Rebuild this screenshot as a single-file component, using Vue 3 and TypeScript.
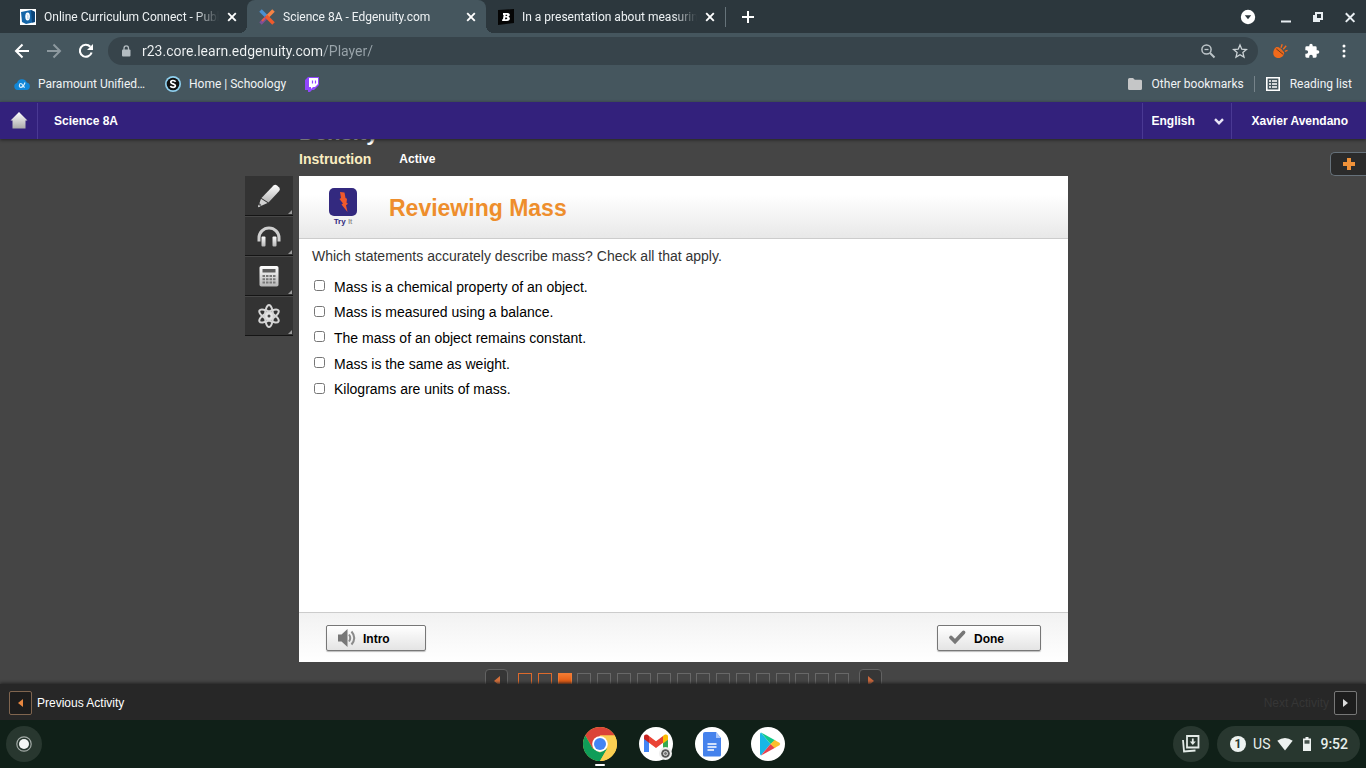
<script setup lang="ts">
import { ref } from 'vue'

interface Tab { id: string; title: string; active: boolean }

const tabs: Tab[] = [
  { id: 'connect', title: 'Online Curriculum Connect - Public', active: false },
  { id: 'edgenuity', title: 'Science 8A - Edgenuity.com', active: true },
  { id: 'brainly', title: 'In a presentation about measuring', active: false },
]
const address = ref('r23.core.learn.edgenuity.com/Player/')
const language = ref('English')
const answers = [
  'Mass is a chemical property of an object.',
  'Mass is measured using a balance.',
  'The mass of an object remains constant.',
  'Mass is the same as weight.',
  'Kilograms are units of mass.',
]
const checked = ref<string[]>([])
const steps = Array.from({ length: 17 }, (_, i) => (i < 2 ? 'done' : i === 2 ? 'current' : 'todo'))
</script>

<template>
  <div class="screen">
    <header class="browser">
      <div class="tabstrip">
        <div v-for="tab in tabs" :key="tab.id" class="tab" :class="{ active: tab.active }">
          <svg v-if="tab.id === 'connect'" class="i16" viewBox="0 0 16 16">
            <rect width="16" height="16" fill="#fff" />
            <path d="M1 3 11 1l4 2v10l-9 2-4-2z" fill="#1566a8" />
            <path d="M11 1l4 2v10l-3 .6z" fill="#0c4478" />
            <ellipse cx="7.6" cy="7.4" rx="2.3" ry="4" fill="#fff" />
            <path d="M7 5.5c1.5 1 .5 2.500 1 4.500" stroke="#9cc3e2" fill="none" />
          </svg>
          <svg v-else-if="tab.id === 'edgenuity'" class="i16" viewBox="0 0 16 16">
            <path d="M1.500 1.500 8 8" stroke="#4b8fd0" stroke-width="3.600" />
            <path d="M8 8 14.500 1.500" stroke="#f58345" stroke-width="3.600" />
            <path d="M8 8 1.500 14.500" stroke="#7d4f96" stroke-width="3.600" />
            <path d="M7 7 14.500 14.500" stroke="#ee5a2c" stroke-width="3.600" />
            <path d="M3 12 6 9" stroke="#e2574c" stroke-width="2" />
          </svg>
          <svg v-else class="i16" viewBox="0 0 16 16">
            <path d="M0 1 16 0v14L0 16z" fill="#050505" />
            <path d="M5 4h4.500c3 0 2.800 3 .9 3.700C13 8.500 12 12 9 12H4l.5-2H5l.6-4H5zM7.700 5.800 7.500 7h1c1 0 1-1.200.2-1.200zM7.300 8.600 7 10.200h1.300c1.200 0 1.300-1.600.2-1.600z" fill="#fff" />
          </svg>
          <span class="tab-title">{{ tab.title }}</span>
          <button class="plain" :aria-label="'Close ' + tab.title">
            <svg class="i16" viewBox="0 0 16 16"><path d="m4.200 4.200 7.600 7.600M11.800 4.200 4.200 11.800" stroke="#fff" stroke-width="1.900" /></svg>
          </button>
        </div>
        <span class="tab-line"></span>
        <button class="plain new-tab" aria-label="New tab">
          <svg class="i16" viewBox="0 0 16 16"><path d="M8 2v12M2 8h12" stroke="#fff" stroke-width="2" /></svg>
        </button>
        <div class="window-controls">
          <button class="plain" aria-label="Search tabs">
            <svg class="i16" viewBox="0 0 16 16"><circle cx="8" cy="8" r="7.200" fill="#fff" /><path d="M4.800 6.300h6.400L8 10.200z" fill="#2c373d" /></svg>
          </button>
          <button class="plain" aria-label="Minimize">
            <svg class="i16" viewBox="0 0 16 16"><path d="M3 12.500h10" stroke="#e8eef2" stroke-width="2" /></svg>
          </button>
          <button class="plain" aria-label="Restore">
            <svg class="i16" viewBox="0 0 16 16" fill="none" stroke="#e8eef2" stroke-width="2"><path d="M6 4h6v6H6z" /><path d="M4 6v6h6" /></svg>
          </button>
          <button class="plain" aria-label="Close window">
            <svg class="i16" viewBox="0 0 16 16"><path d="m3.800 4.300 8.600 8.600M12.400 4.300 3.800 12.900" stroke="#e8eef2" stroke-width="2" /></svg>
          </button>
        </div>
      </div>

      <div class="toolbar">
        <button class="plain" aria-label="Back">
          <svg class="i16" viewBox="0 0 16 16" fill="none" stroke="#fff" stroke-width="2"><path d="M15 8H2.500M8.500 1.500 2 8l6.500 6.500" /></svg>
        </button>
        <button class="plain" aria-label="Forward">
          <svg class="i16" viewBox="0 0 16 16" fill="none" stroke="#8d999f" stroke-width="2"><path d="M1 8h12.500M7.500 1.500 14 8l-6.500 6.500" /></svg>
        </button>
        <button class="plain" aria-label="Reload">
          <svg class="i16" viewBox="0 0 16 16"><path d="M13.600 9.500A6 6 0 1 1 12.300 3.700" fill="none" stroke="#fff" stroke-width="2.100" /><path d="M15 1v6H9z" fill="#fff" /></svg>
        </button>
        <div class="omnibox">
          <svg class="lock" viewBox="0 0 10 12"><rect x="1" y="4.500" width="8.500" height="7" rx="1" fill="#b3bcc1" /><path d="M3 5V3.200a2.200 2.200 0 0 1 4.500 0V5" fill="none" stroke="#b3bcc1" stroke-width="1.300" /></svg>
          <input v-model="address" class="address" type="text" aria-label="Address" />
          <button class="plain" aria-label="Zoom">
            <svg class="i16" viewBox="0 0 16 16" fill="none" stroke="#bcc4c8"><circle cx="6.500" cy="6.500" r="4.600" stroke-width="1.500" /><path d="m10 10 4.500 4.500" stroke-width="2" /><path d="M4.500 6.500h4" stroke-width="1.300" /></svg>
          </button>
          <button class="plain" aria-label="Bookmark this page">
            <svg class="i16" viewBox="0 0 16 16"><path d="m8 2 1.800 4.200 4.600.4-3.500 3 1.100 4.500L8 11.700l-4 2.400 1.100-4.500-3.500-3 4.600-.4z" fill="none" stroke="#ccd3d6" stroke-width="1.300" /></svg>
          </button>
        </div>
        <button class="plain" aria-label="Extension">
          <svg class="i16" viewBox="0 0 16 16"><path d="M4 4.500C.3 7 .2 13.500 4.500 14.800c4.500 1 7.500-1.800 7.500-4.800z" fill="#f26a1b" /><path d="M3.800 4.600q4.500-.8 8.200 5.600" fill="#f26a1b" stroke="#f26a1b" stroke-width="1" /><path d="m4.200 5.800 7 5.600" stroke="#6b3a1c" stroke-width="1" /><path d="m9 4.800 1.200-3.600M11.200 6.300l3-3.500M12.800 8.300l2.700-.9" stroke="#f26a1b" stroke-width="1.400" /></svg>
        </button>
        <button class="plain" aria-label="Extensions">
          <svg class="i16" viewBox="0 0 24 24"><path d="M20.500 11H19V7a2 2 0 0 0-2-2h-4V3.500a2.500 2.500 0 0 0-5 0V5H4a2 2 0 0 0-2 2v3.800h1.500a2.700 2.700 0 0 1 0 5.400H2V20a2 2 0 0 0 2 2h3.800v-1.500a2.700 2.700 0 0 1 5.400 0V22H17a2 2 0 0 0 2-2v-4h1.500a2.500 2.500 0 0 0 0-5z" fill="#fff" /></svg>
        </button>
        <button class="plain" aria-label="Menu">
          <svg class="i16" viewBox="0 0 16 16" fill="#fff"><circle cx="8" cy="3" r="1.500" /><circle cx="8" cy="8" r="1.500" /><circle cx="8" cy="13" r="1.500" /></svg>
        </button>
      </div>

      <nav class="bookmarks" aria-label="Bookmarks">
        <a href="#" class="bookmark first">
          <svg class="i16" viewBox="0 0 16 16"><path d="M3.500 14a3.500 3.500 0 0 1-.5-6.900 5.200 5.200 0 0 1 9.800-.6A3.800 3.800 0 0 1 12.500 14z" fill="#1187d8" /><path d="M11 6.500c-1 3-2.500 4.800-4.300 4.800s-1.700-3.800.1-3.800S9 11.300 10.800 11.300" fill="none" stroke="#d6efff" stroke-width="1.200" /></svg>
          <span>Paramount Unified…</span>
        </a>
        <a href="#" class="bookmark schoology">
          <svg class="i16" viewBox="0 0 16 16"><circle cx="8" cy="8" r="8" fill="#8fd0ef" /><circle cx="8" cy="8" r="6.300" fill="#111" /><path d="M10.600 5.700C9.500 4 5.700 4.100 5.800 6.200c.1 2 4.700 1.300 4.600 3.500-.1 2.200-4 2.100-5.100.3" fill="none" stroke="#fff" stroke-width="1.700" /></svg>
          <span>Home | Schoology</span>
        </a>
        <a href="#" class="bookmark twitch" aria-label="Twitch">
          <svg class="i16" viewBox="0 0 16 16"><path d="M4 1h11v8l-5 5H8l-2 2H4v-2H1V4z" fill="#9146ff" /><path d="M5 2h9v6l-3 3H9l-2 2v-2H5z" fill="#fff" /><path d="M8.500 4.500v3M11.500 4.500v3" stroke="#9146ff" stroke-width="1.200" /></svg>
        </a>
        <a href="#" class="bookmark other">
          <svg class="i16" viewBox="0 0 16 16"><path d="M1 3.500Q1 2 2.500 2H6l1.800 1.800h5.700Q15 3.800 15 5v7.500q0 1.500-1.500 1.500h-11Q1 14 1 12.500z" fill="#c5c6c7" /></svg>
          <span>Other bookmarks</span>
        </a>
        <a href="#" class="bookmark reading">
          <svg class="i16" viewBox="0 0 16 16" fill="none" stroke="#fff"><path d="M1.800 1.800h12.400v12.400H1.800z" stroke-width="1.600" /><path d="M4 5h2M7 5h5M4 8h2M7 8h5M4 11h2M7 11h5" stroke-width="1.500" /></svg>
          <span>Reading list</span>
        </a>
      </nav>
    </header>

    <div class="course">
      <a href="#" class="home" aria-label="Home">
        <svg class="i18" viewBox="0 0 18 18"><defs><linearGradient id="homeFill" x1="0" y1="0" x2="0" y2="1"><stop offset="0" stop-color="#fff" /><stop offset="1" stop-color="#aaa" /></linearGradient></defs><path d="M9 0 17.500 8.500H15.500V16.500H2.500V8.500H.5z" fill="url(#homeFill)" /></svg>
      </a>
      <a href="#" class="course-name">Science 8A</a>
      <label class="language">
        <select v-model="language" aria-label="Language">
          <option>English</option>
          <option>Español</option>
        </select>
        <svg viewBox="0 0 10 7"><path d="m1 1.200 4 4 4-4" fill="none" stroke="#e9e5f7" stroke-width="2.400" /></svg>
      </label>
      <a href="#" class="user">Xavier Avendano</a>
    </div>

    <main class="stage">
      <div class="rail">
        <button aria-label="Highlighter">
          <svg viewBox="0 0 24 24"><path d="M16.500 1.500q1.800-1.300 3.500 0l2.200 2q1.500 1.500 0 3.500L11.500 18.500 4.500 14z" fill="url(#toolFill)" /><path d="m4 14.800 6.600 4.300L1 23.200z" fill="#d2d2d2" /><path d="m2.300 18.800 2.200 2.400L1 23z" fill="#555" /><path d="M1.600 20.800 1 23.200l2.300-1z" fill="#ddd" /></svg>
        </button>
        <button aria-label="Audio">
          <svg viewBox="0 0 24 24"><path d="M2 17.500V14a10 10 0 0 1 20 0v3.500" fill="none" stroke="#cfcfcf" stroke-width="3" /><rect x="4.500" y="12.500" width="4" height="10" rx="1" fill="url(#toolFill)" /><rect x="15.500" y="12.500" width="4" height="10" rx="1" fill="url(#toolFill)" /></svg>
        </button>
        <button aria-label="Calculator">
          <svg viewBox="0 0 24 24"><rect x="2.500" y="2" width="19" height="20.500" rx="1.800" fill="url(#toolFill)" /><path d="M5.500 5h13v3.500h-13z" fill="#5d5d5d" /><path d="M5.500 12h13M5.500 15.200h13M5.500 18.400h13" stroke="#777" stroke-width="2" stroke-dasharray="2.500 1" /></svg>
        </button>
        <button aria-label="Periodic table">
          <svg viewBox="0 0 24 24"><defs><linearGradient id="toolFill" x1="0" y1="0" x2="0" y2="1"><stop offset="0" stop-color="#fff" /><stop offset="1" stop-color="#b5b5b5" /></linearGradient></defs><g fill="none" stroke="#d5d5d5" stroke-width="2"><ellipse cx="12" cy="12" rx="4" ry="11" /><ellipse cx="12" cy="12" rx="4" ry="11" transform="rotate(60 12 12)" /><ellipse cx="12" cy="12" rx="4" ry="11" transform="rotate(120 12 12)" /></g><circle cx="12" cy="12" r="3.700" fill="#e4e4e4" /><circle cx="12" cy="12" r="1.500" fill="#444" /></svg>
        </button>
      </div>

      <div class="lesson">
        <h1>Density</h1>
        <div class="crumbs"><strong>Instruction</strong><span>Active</span></div>
        <section class="panel">
          <header class="panel-head">
            <div class="tryit">
              <svg viewBox="0 0 28 28"><rect x="0" y="0" width="28" height="28" rx="5" fill="#33297f" /><path d="m11 4 4.500.5 1 5.500 1.500.8-.5 4 1.500 1-2 1.500L18.500 24l-6-7.500 1.500-1-3.500-4.500 1.500-1z" fill="#f0592b" /></svg>
              <small><b>Try</b> It</small>
            </div>
            <h2>Reviewing Mass</h2>
          </header>
          <form id="question" class="question" @submit.prevent>
            <p>Which statements accurately describe mass? Check all that apply.</p>
            <div class="answers">
              <label v-for="answer in answers" :key="answer">
                <input v-model="checked" type="checkbox" :value="answer" />
                <span>{{ answer }}</span>
              </label>
            </div>
          </form>
          <footer class="panel-foot">
            <button type="button" class="action intro">
              <svg viewBox="0 0 20 18"><path d="M1 5.500h3.500L10.500 0v18L4.500 12.500H1z" fill="#777" /><path d="M12 5.500q2.500 3.500 0 7M14.500 2.500q5.500 6.500 0 13" fill="none" stroke="#8b8b8b" stroke-width="2" /></svg>
              <span>Intro</span>
            </button>
            <button type="submit" form="question" class="action finish">
              <svg viewBox="0 0 20 18"><path d="m3 8.500 4 4L15.500 3.500" fill="none" stroke="#777" stroke-width="3.800" stroke-linecap="round" /></svg>
              <span>Done</span>
            </button>
          </footer>
        </section>
        <div class="pager">
          <button class="page-arrow" aria-label="Previous step"><svg viewBox="0 0 8 10"><path d="M7 0v10L1 5z" fill="#d4703c" /></svg></button>
          <div class="steps">
            <button v-for="(state, i) in steps" :key="i" class="step" :class="state" :aria-label="'Step ' + (i + 1)"></button>
          </div>
          <button class="page-arrow" aria-label="Next step"><svg viewBox="0 0 8 10"><path d="M1 0v10l6-5z" fill="#c9683d" /></svg></button>
        </div>
      </div>

      <button class="expand" aria-label="Open panel"><svg viewBox="0 0 14 14"><path d="M5 1h4v4h4v4H9v4H5V9H1V5h4z" fill="#f0923a" /></svg></button>
    </main>

    <footer class="activity">
      <button class="turn" aria-label="Previous activity"><svg viewBox="0 0 8 10"><path d="M6 1v8L1 5z" fill="#e88740" /></svg></button>
      <span>Previous Activity</span>
      <span class="next">Next Activity</span>
      <button class="turn dim" aria-label="Next activity"><svg viewBox="0 0 8 10"><path d="M1 1v8l5-4z" fill="#ddd" /></svg></button>
    </footer>

    <div class="shelf">
      <button class="round launcher" aria-label="Launcher">
        <svg class="i16" viewBox="0 0 16 16"><circle cx="8" cy="8" r="7.200" fill="none" stroke="#a3aba7" stroke-width="1.200" /><circle cx="8" cy="8" r="5" fill="#f4f6f5" /></svg>
      </button>
      <div class="apps">
        <button class="app running" aria-label="Chrome">
          <svg viewBox="0 0 34 34"><circle cx="17" cy="17" r="17" fill="#fbc94a" /><path d="M17 8.500h14.700A17 17 0 0 0 2.300 8.500L9.600 21.200z" fill="#db4437" /><path d="M2.300 8.500A17 17 0 0 0 17 34l7.400-12.800L17 25.500l-7.400-4.300z" fill="#0f9d58" /><path d="M24.400 21.200 17 34A17 17 0 0 0 31.700 8.500H17z" fill="#fbcf52" /><circle cx="17" cy="17" r="7.800" fill="#fff" /><circle cx="17" cy="17" r="6" fill="#4285f4" /></svg>
        </button>
        <button class="app" aria-label="Gmail">
          <svg viewBox="0 0 34 34"><circle cx="17" cy="17" r="17" fill="#fff" /><path d="M5 11v14h5V14z" fill="#4285f4" /><path d="M24 14v11h5V11z" fill="#34a853" /><path d="M24 10v6.500l5-3.700V10c0-3-2.700-3-5-1z" fill="#fbbc04" /><path d="m10 9 7 5.300L24 9v6.800l-7 5.200-7-5.200z" fill="#ea4335" /><path d="M5 10c0-3 3-3 5-1v6.800l-5-3.700z" fill="#c5221f" /><circle cx="26.500" cy="26.500" r="6.500" fill="#eee" /><circle cx="26.500" cy="26.500" r="4.300" fill="#555" /><circle cx="26.500" cy="26.500" r="2" fill="#777" stroke="#ddd" /></svg>
        </button>
        <button class="app" aria-label="Docs">
          <svg viewBox="0 0 34 34"><circle cx="17" cy="17" r="17" fill="#fff" /><path d="M10 5h11l5 6v17q0 1.500-1.500 1.500h-15Q8 29.500 8 28V7q0-2 2-2z" fill="#4582ec" /><path d="M21 5v6h5z" fill="#a9c6fa" /><path d="M12.500 17h9M12.500 20h9M12.500 23h6.500" stroke="#fff" stroke-width="1.400" /></svg>
        </button>
        <button class="app" aria-label="Play Store">
          <svg viewBox="0 0 34 34"><circle cx="17" cy="17" r="17" fill="#fff" /><path d="M10 5.500 19.500 17 10 28.500q-1-.5-1-2v-19q0-1.500 1-2z" fill="#18b7e6" /><path d="m10 5.500 14.500 8L19.500 17z" fill="#10c98a" /><path d="m10 28.500 14.500-8L19.500 17z" fill="#e8404f" /><path d="m23.500 13 5 2.800q1.500 1.200 0 2.400l-5 2.800L19.500 17z" fill="#fbbf2c" /></svg>
        </button>
      </div>
      <div class="tray">
        <button class="round" aria-label="Holding space">
          <svg class="i18" viewBox="0 0 18 18" fill="none" stroke="#e3ebe7" stroke-width="1.800"><path d="M5 1h11.500v11.500H5z" /><path d="M1 5 2 16.500 13.500 15.500" /><path d="M10.800 3.500v4" /><path d="M7.800 6.500h6l-3 3.500z" fill="#e3ebe7" stroke="none" /></svg>
        </button>
        <button class="status" aria-label="Status">
          <span class="count">1</span>
          <span class="keyboard">US</span>
          <svg class="i16" viewBox="0 0 16 16"><path d="M8 14.500 .3 4.800q7.700-5.600 15.400 0z" fill="#edf2f0" /></svg>
          <svg class="battery" viewBox="0 0 8 14"><path d="M2.500 0h3v1.500H8V14H0V1.500h2.500z" fill="#edf2f0" /><path d="M1.500 3.200h5v3.500h-5z" fill="#46534d" /></svg>
          <span class="clock">9:52</span>
        </button>
      </div>
    </div>
  </div>
</template>

<style>
body { background: #454545; }
</style>

<style scoped>
* { box-sizing: border-box; }
button { font: inherit; color: inherit; margin: 0; padding: 0; border: 0; background: none; cursor: pointer; }
a { color: inherit; text-decoration: none; }
svg { display: block; flex: none; }
.i16 { width: 16px; height: 16px; }
.i18 { width: 18px; height: 18px; }

.screen { display: flex; flex-direction: column; height: 100vh; min-height: 480px; overflow: hidden; font: 12px "Liberation Sans", Arial, sans-serif; color: #fff; background: #454545; }

.browser { flex: none; background: #45565e; font-family: Roboto, sans-serif; }
.tabstrip { display: flex; align-items: center; height: 33px; padding: 0 8px; background: #2c373d; }
.tab { position: relative; display: flex; align-items: center; width: 239px; height: 33px; padding: 0 7px 0 12px; color: #eef2f4; }
.tab.active { background: #45565e; border-radius: 8px 8px 0 0; }
.tab.active::before, .tab.active::after { content: ""; position: absolute; bottom: 0; width: 8px; height: 8px; }
.tab.active::before { right: 100%; background: radial-gradient(circle at 0 0, transparent 8px, #45565e 8px); }
.tab.active::after { left: 100%; background: radial-gradient(circle at 100% 0, transparent 8px, #45565e 8px); }
.tab-title { flex: 1; margin: 0 5px 0 8px; overflow: hidden; white-space: nowrap; mask-image: linear-gradient(90deg, #000 calc(100% - 24px), transparent); }
.tab-line { width: 1px; height: 20px; background: #66737a; }
.new-tab { margin-left: 14px; }
.window-controls { display: flex; gap: 16px; margin-left: auto; }
.window-controls button:first-child { margin-right: 6px; }

.toolbar { display: flex; align-items: center; gap: 16px; height: 36px; padding: 0 14px; }
.omnibox { flex: 1; display: flex; align-items: center; gap: 16px; height: 28px; margin: 0 -2px 0 -2px; padding: 0 10px 0 13px; border-radius: 14px; background: #37444b; }
.lock { width: 10px; height: 12px; }
.address { flex: 1; min-width: 0; margin-left: -10px; padding: 0 0 0 5px; border: 0; outline: 0; font: 14px Roboto, sans-serif; color: transparent; caret-color: #fff; background: linear-gradient(90deg, #f1f4f5 186px, #9aa5ab 186px); background-clip: text; -webkit-background-clip: text; }

.bookmarks { display: flex; align-items: center; height: 33px; padding: 0 14px 4px; color: #f0f3f5; }
.bookmark { display: flex; align-items: center; gap: 9px; white-space: nowrap; }
.first, .schoology { gap: 8px; }
.schoology { margin-left: 20px; }
.twitch { margin-left: 18px; }
.other { margin-left: auto; }
.reading { margin-left: 10px; padding-left: 10px; border-left: 1px solid #76838a; }

.course { position: relative; z-index: 2; flex: none; display: flex; align-items: stretch; height: 37px; padding-top: 1px; line-height: 36px; font-weight: bold; background: #33217c; box-shadow: 0 1px 3px #222; }
.home { display: flex; align-items: center; justify-content: center; width: 38px; border-right: 1px solid #4a3993; }
.course-name { margin-left: 16px; }
.language { position: relative; display: flex; align-items: center; width: 90px; margin-left: auto; border-left: 1px solid #4a3993; border-right: 1px solid #4a3993; }
.language select { width: 100%; height: 100%; padding: 0 0 0 9px; border: 0; appearance: none; background: transparent; color: inherit; font: inherit; }
.language svg { position: absolute; right: 7px; width: 10px; height: 7px; pointer-events: none; }
.user { padding: 0 18px 0 20px; }

.stage { flex: 1; min-height: 0; display: grid; grid-template-columns: minmax(54px, 1fr) minmax(0, 769px) minmax(36px, 1fr); padding-left: 1px; overflow: hidden; background: #454545; }
.rail { display: grid; align-content: start; justify-self: end; margin: 37px 6px 0 0; }
.rail button { position: relative; display: flex; align-items: center; justify-content: center; width: 48px; height: 40px; padding-right: 1px; background: #333; border-bottom: 1px solid #151515; }
.rail button + button { border-top: 1px solid #484848; }
.rail svg { width: 24px; height: 24px; }
.rail button::after { content: ""; position: absolute; right: 1px; bottom: 1px; border: 2px solid transparent; border-right-color: #999; border-bottom-color: #999; }

.lesson { display: flex; flex-direction: column; min-width: 0; min-height: 0; }
.lesson h1 { margin: -18px 0 0; font-size: 22px; line-height: 24px; }
.crumbs { display: flex; gap: 28px; align-items: center; height: 31px; padding-bottom: 4px; line-height: 20px; }
.crumbs strong { font-size: 14px; color: #fbeec1; }
.crumbs span { font-weight: bold; }
.panel { flex: 1; min-height: 0; display: flex; flex-direction: column; background: #fff; color: #000; }
.panel-head { display: flex; align-items: center; height: 63px; padding-left: 30px; border-bottom: 1px solid #ccc; background: linear-gradient(#fff 30%, #e8e8e8); }
.tryit { display: grid; justify-items: center; width: 28px; gap: 1px; }
.tryit svg { width: 28px; height: 28px; }
.tryit small { font-size: 8px; line-height: 9px; color: #777; }
.tryit b { color: #33297f; }
.panel-head h2 { margin: 2px 0 0 32px; font-size: 23px; line-height: 28px; color: #ee8e2c; }
.question { flex: 1; min-height: 0; padding: 7px 13px; overflow: auto; font-size: 14px; }
.question p { margin: 0; line-height: 20px; color: #333; }
.answers { display: grid; grid-auto-rows: 1fr; height: 128px; margin-top: 8px; }
.answers label { display: flex; align-items: center; gap: 9px; }
.answers input { width: 11px; height: 11px; margin: 0 0 2px 2px; }
.panel-foot { display: flex; align-items: center; justify-content: space-between; height: 50px; padding: 0 27px; border-top: 1px solid #ccc; background: linear-gradient(#f2f2f2, #fff); }
.action { display: flex; align-items: center; gap: 6px; height: 26px; padding: 0 10px; border: 1px solid #777; border-radius: 2px; font-weight: bold; background: linear-gradient(#fff, #e4e4e4); box-shadow: 0 1px 1px #bbb; }
.action svg { width: 20px; height: 18px; }
.action span { padding-top: 2px; }
.intro { width: 100px; }
.finish { width: 104px; }

.pager { display: flex; justify-content: center; gap: 10px; height: 22px; padding-top: 7px; }
.page-arrow { flex: none; display: flex; align-items: center; justify-content: center; width: 23px; height: 23px; border: 1px solid #626262; border-radius: 4px; background: #363636; }
.page-arrow svg { width: 8px; height: 10px; }
.steps { display: flex; justify-content: space-between; width: 331px; padding-top: 4px; }
.step { width: 14px; height: 14px; border: 1px solid #686868; }
.step.done { border-color: #dd6a2c; }
.step.current { border-color: #f07a35; background: linear-gradient(#f27a30, #d94a05); }
.expand { display: flex; align-items: center; justify-content: center; justify-self: end; width: 36px; height: 24px; margin-top: 13px; border: 1px solid #66717a; border-right: 0; border-radius: 5px 0 0 5px; background: #2b2b2b; }
.expand svg { width: 14px; height: 14px; }

.activity { position: relative; z-index: 2; flex: none; display: flex; align-items: center; gap: 5px; height: 36px; padding: 2px 9px 0; background: #272727; box-shadow: 0 -1px 3px #222; }
.turn { display: flex; align-items: center; justify-content: center; width: 23px; height: 24px; border: 1px solid #80654f; border-radius: 2px; background: #1d1d1d; }
.turn.dim { border-color: #777; }
.turn svg { width: 8px; height: 10px; }
.next { margin-left: auto; color: #363636; }

.shelf { position: relative; z-index: 3; flex: none; display: grid; grid-template-columns: 1fr auto 1fr; align-items: center; height: 48px; padding: 0 6px 0 8px; background: #102018; font-family: Roboto, sans-serif; }
.round { display: flex; align-items: center; justify-content: center; width: 36px; height: 36px; border-radius: 50%; background: #28372f; }
.launcher { margin-left: -2px; }
.apps { display: flex; gap: 22px; }
.app { position: relative; width: 34px; height: 34px; }
.app svg { width: 34px; height: 34px; }
.running::after { content: ""; position: absolute; left: 12px; bottom: -5px; width: 10px; height: 2px; border-radius: 1px; background: #fff; }
.tray { display: flex; justify-content: flex-end; gap: 8px; }
.status { display: flex; align-items: center; height: 36px; padding: 0 12px 0 13px; border-radius: 18px; background: #28372f; color: #e8efec; }
.count { width: 16px; height: 16px; border-radius: 50%; background: #edf2f0; color: #28372f; font-size: 12px; font-weight: bold; line-height: 16px; }
.keyboard { margin: 0 7px; font-size: 14px; }
.battery { width: 8px; height: 14px; margin: 0 9px 0 10px; }
.clock { font-size: 14px; font-weight: 500; }
</style>
